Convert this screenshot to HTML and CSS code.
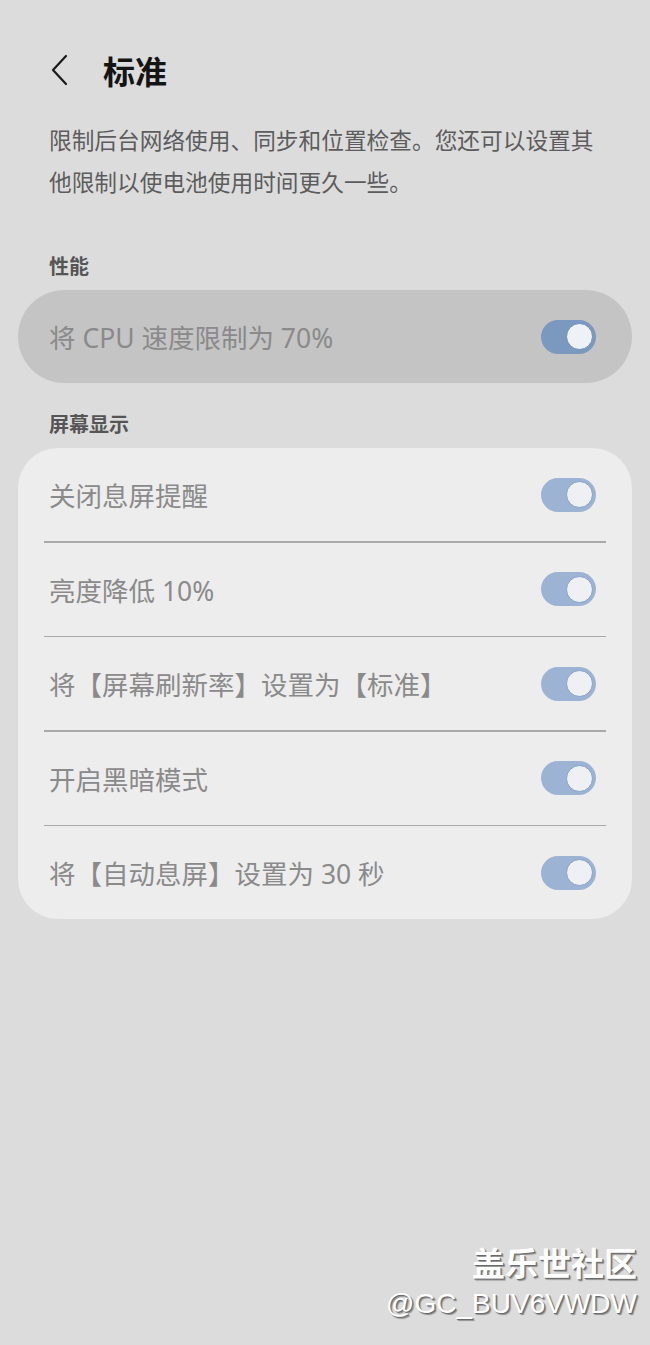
FILE: index.html
```html
<!doctype html>
<html lang="zh-CN">
  <head>
    <meta charset="UTF-8" />
    <meta name="viewport" content="width=device-width, initial-scale=1.0" />
    <title>标准</title>
    <link rel="stylesheet" href="styles.css">
  </head>
  <body>
    <div class="page">
      <div class="header">
        <svg class="back" width="20" height="32" viewBox="0 0 20 32">
          <path d="M16 2 L3 16 L16 30" fill="none" stroke="#1a1a1a" stroke-width="2.2" stroke-linecap="round" stroke-linejoin="round" />
        </svg>
        <h1>标准</h1>
      </div>

      <p class="desc">限制后台网络使用、同步和位置检查。您还可以设置其他限制以使电池使用时间更久一些。</p>

      <div class="section-label">性能</div>
      <div class="card card-dim">
        <div class="row">
          <span class="row-text">将 CPU 速度限制为 70%</span>
          <span class="toggle toggle-dark"><span class="knob"></span></span>
        </div>
      </div>

      <div class="section-label">屏幕显示</div>
      <div class="card card-light">
        <div class="row">
          <span class="row-text">关闭息屏提醒</span>
          <span class="toggle"><span class="knob"></span></span>
        </div>
        <div class="divider"></div>
        <div class="row">
          <span class="row-text">亮度降低 10%</span>
          <span class="toggle"><span class="knob"></span></span>
        </div>
        <div class="divider"></div>
        <div class="row">
          <span class="row-text">将【屏幕刷新率】设置为【标准】</span>
          <span class="toggle"><span class="knob"></span></span>
        </div>
        <div class="divider"></div>
        <div class="row">
          <span class="row-text">开启黑暗模式</span>
          <span class="toggle"><span class="knob"></span></span>
        </div>
        <div class="divider"></div>
        <div class="row">
          <span class="row-text">将【自动息屏】设置为 30 秒</span>
          <span class="toggle"><span class="knob"></span></span>
        </div>
      </div>

      <div class="watermark">
        <div class="wm-title">盖乐世社区</div>
        <div class="wm-user">@GC_BUV6VWDW</div>
      </div>
    </div>
  </body>
</html>
```

FILE: styles.css
```css
body {
  margin: 0;
  padding: 0;
  background-color: #dcdcdc;
  font-family: "Noto Sans", "Noto Sans CJK SC", sans-serif;
}

.page {
  position: relative;
  height: 1345px;
  padding: 0 18px;
  overflow: hidden;
}

.header {
  display: flex;
  align-items: center;
  height: 40px;
  padding-top: 50px;
  padding-left: 32px;
}

.back {
  display: block;
}

.header h1 {
  margin: 0 0 0 33px;
  font-family: "Noto Sans CJK SC", sans-serif;
  font-size: 32px;
  line-height: 40px;
  font-weight: 700;
  color: #141414;
}

.desc {
  margin: 30px 0 0;
  padding: 0 31px;
  font-size: 22.7px;
  line-height: 42px;
  color: #5c5c5c;
}

.section-label {
  margin-top: 48px;
  padding-left: 31px;
  font-family: "Noto Sans CJK SC", sans-serif;
  font-size: 20px;
  line-height: 28px;
  font-weight: 700;
  color: #555;
}

.card + .section-label {
  margin-top: 27px;
}

.card {
  margin-top: 10px;
}

.card-dim {
  background-color: #c4c4c4;
  border-radius: 47px;
}

.card-light {
  background-color: #ededed;
  border-radius: 40px;
}

.row {
  display: flex;
  align-items: center;
  justify-content: space-between;
  height: 93px;
  padding: 0 36px 0 31px;
}

.row-text {
  font-size: 26.5px;
  color: #8a8a8a;
}

.divider {
  height: 1.5px;
  margin: 0 26px;
  background-color: #a9a9a9;
}

.toggle {
  display: flex;
  align-items: center;
  justify-content: flex-end;
  width: 55px;
  height: 34px;
  box-sizing: border-box;
  padding: 0 3px;
  border-radius: 17px;
  background-color: #9cb3d4;
}

.toggle-dark {
  background-color: #7b98be;
}

.knob {
  width: 25px;
  height: 25px;
  border-radius: 50%;
  background-color: #eef0f3;
  border: 1.5px solid #859fc4;
}

.toggle-dark .knob {
  background-color: #eef1f6;
  border-color: #6f8db6;
}

.watermark {
  position: absolute;
  right: 13px;
  top: 1240px;
  text-align: right;
  color: #fff;
  text-shadow: 1px 1px 0 #6a6a6a, 2px 2px 1px rgba(0, 0, 0, 0.35);
}

.wm-title {
  font-family: "Noto Sans CJK SC", sans-serif;
  font-size: 33px;
  line-height: 44px;
  font-weight: 700;
}

.wm-user {
  font-family: "Liberation Sans", Arial, sans-serif;
  font-size: 28px;
  line-height: 40px;
}
```
